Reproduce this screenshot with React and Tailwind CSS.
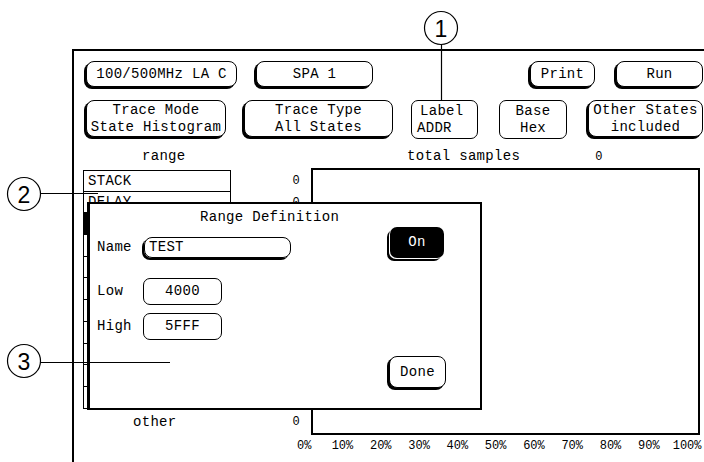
import React from 'react';

// Logic analyzer "Range Definition" screen with numbered callouts

const rangeRows = ['STACK', 'DELAY', '', '', '', '', '', '', '', '', ''];
const axis = ['0%', '10%', '20%', '30%', '40%', '50%', '60%', '70%', '80%', '90%', '100%'];

const Key = ({ className = '', flat = false, children }) => (
  <div
    className={`shrink-0 flex flex-col items-center justify-center border border-black bg-white leading-[17px] whitespace-pre ${
      flat ? 'rounded-[7px]' : 'rounded-[8px] shadow-[-2px_2px_0_0_#000]'
    } ${className}`}
  >
    {children}
  </div>
);

const Callouts = () => (
  <svg className="absolute inset-0 pointer-events-none" width="704" height="462">
    <g fill="none" stroke="#000" strokeWidth="1.2">
      <circle cx="441" cy="28" r="16.5" />
      <circle cx="24" cy="194" r="16.5" />
      <circle cx="24" cy="361" r="16.5" />
      <line x1="441.5" y1="44.5" x2="441.5" y2="100" />
      <line x1="40.5" y1="193.5" x2="98" y2="193.5" />
      <line x1="40.5" y1="362.5" x2="170" y2="362.5" />
    </g>
    <g fontFamily="'Liberation Sans', Arial, sans-serif" fontSize="23" textAnchor="middle" fill="#000">
      <text x="441" y="36.5">1</text>
      <text x="24" y="202.5">2</text>
      <text x="24" y="369.5">3</text>
    </g>
  </svg>
);

export default function App() {
  return (
    <div className="relative w-[704px] h-[462px] overflow-hidden bg-white text-black font-['Liberation_Mono',monospace] text-[14px] tracking-[0.3px]">
      <div className="ml-[72px] mt-[49px] h-[413px] border-l-2 border-t-2 border-black">
        {/* top softkeys */}
        <div className="flex items-start mt-[10px]">
          <Key className="ml-[12px] w-[151px] h-[26px]">100/500MHz LA C</Key>
          <Key className="ml-[19px] w-[117px] h-[26px]">SPA 1</Key>
          <Key className="ml-[157px] w-[65px] h-[26px]">Print</Key>
          <Key className="ml-[21px] w-[87px] h-[26px]">Run</Key>
        </div>
        <div className="flex items-start h-[39px] mt-[13px]">
          <Key className="ml-[12px] w-[140px] h-[37px]">
            <span>Trace Mode</span>
            <span>State Histogram</span>
          </Key>
          <Key className="ml-[18px] w-[149px] h-[37px]">
            <span>Trace Type</span>
            <span>All States</span>
          </Key>
          <Key flat className="ml-[18px] w-[67px] h-[39px] !items-start pl-[5px]">
            <span className="ml-[3px]">Label</span>
            <span>ADDR</span>
          </Key>
          <Key flat className="ml-[21px] w-[68px] h-[39px]">
            <span>Base</span>
            <span>Hex</span>
          </Key>
          <Key className="ml-[21px] w-[115px] h-[37px]">
            <span>Other States</span>
            <span>included</span>
          </Key>
        </div>

        {/* range list + histogram */}
        <div className="flex mt-[9px]">
          <div className="w-[237px] shrink-0">
            <div className="pl-[68px] h-[17px] leading-[17px]">range</div>
            <div className="mt-[5px] ml-[9px]">
              {rangeRows.map((name, i) => (
                <div key={i} className="flex items-center">
                  <div
                    className={`w-[148px] h-[21.7px] border-x border-b border-black pl-[4px] leading-[20px] ${
                      i === 0 ? 'border-t' : ''
                    } ${i === 2 ? 'bg-black' : ''}`}
                  >
                    {name}
                  </div>
                  {i < 2 && <div className="w-[69px] text-right text-[12px]">0</div>}
                </div>
              ))}
            </div>
            <div className="flex items-center h-[17px] mt-[5px]">
              <span className="pl-[59px]">other</span>
              <span className="ml-auto pr-[11px] text-[12px]">0</span>
            </div>
          </div>

          <div className="flex-1">
            <div className="flex items-baseline h-[17px] leading-[17px]">
              <span className="ml-[96px]">total samples</span>
              <span className="ml-[75px] text-[12px]">0</span>
            </div>
            <div className="mt-[3px] w-[389px] h-[267px] border-2 border-black" />
            <div className="flex mt-[4px] -ml-[26px] text-[12px] leading-[14px] tracking-normal">
              {axis.map((a) => (
                <div key={a} className="w-[38.3px] shrink-0 text-center">
                  {a}
                </div>
              ))}
            </div>
          </div>
        </div>
      </div>

      {/* Range Definition pop-up */}
      <div className="absolute left-[87px] top-[202px] w-[395px] h-[208px] border-2 border-l-[3px] border-black bg-white">
        <div className="ml-[110px] mt-[5px] leading-[17px]">Range Definition</div>
        <div className="flex">
          <div className="pl-[7px]">
            <div className="flex items-center mt-[11px]">
              <span className="w-[47px]">Name</span>
              <div className="w-[147px] h-[21px] rounded-[8px] border border-black shadow-[-2px_2px_0_0_#000] pl-[4px] leading-[19px]">
                TEST
              </div>
            </div>
            <div className="flex items-center mt-[20px]">
              <span className="w-[46px]">Low</span>
              <Key flat className="w-[79px] h-[27px]">4000</Key>
            </div>
            <div className="flex items-center mt-[8px]">
              <span className="w-[46px]">High</span>
              <Key flat className="w-[79px] h-[27px]">5FFF</Key>
            </div>
          </div>
          <div className="ml-[99px]">
            <div className="mt-[1px] w-[54px] h-[31px] rounded-[7px] bg-black text-white flex items-center justify-center shadow-[-1px_1px_0_0_#fff,-3px_3px_0_0_#000]">
              On
            </div>
            <Key className="mt-[98px] -ml-[1px] w-[57px] h-[32px]">Done</Key>
          </div>
        </div>
      </div>

      <Callouts />
    </div>
  );
}
